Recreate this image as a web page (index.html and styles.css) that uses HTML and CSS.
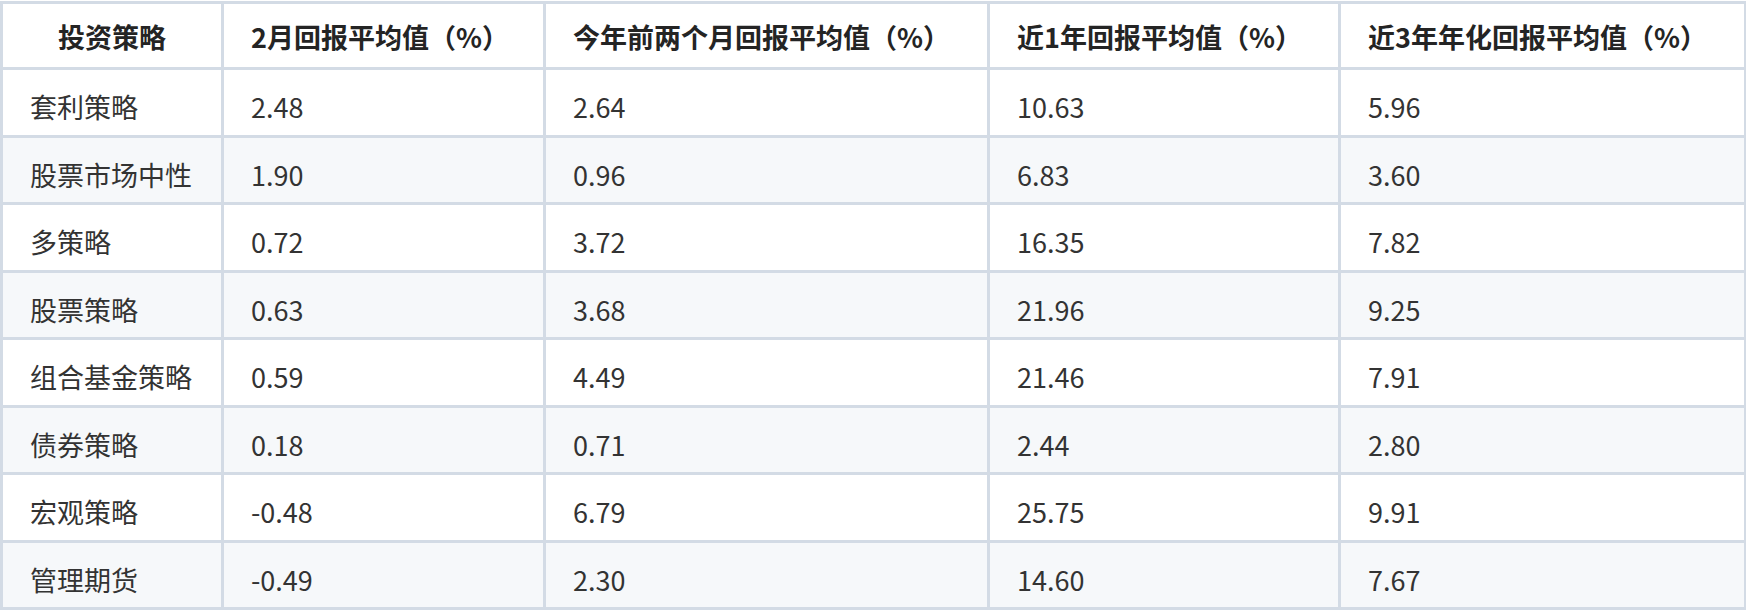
FILE: index.html
```html
<!DOCTYPE html>
<html lang="zh-CN">
<head>
<meta charset="utf-8">
<title>投资策略回报</title>
<link rel="stylesheet" href="styles.css">
</head>
<body>
<table class="returns">
  <colgroup>
    <col class="c1"><col class="c2"><col class="c3"><col class="c4"><col class="c5">
  </colgroup>
  <thead>
    <tr>
      <th class="center">投资策略</th>
      <th>2月回报平均值（%）</th>
      <th>今年前两个月回报平均值（%）</th>
      <th>近1年回报平均值（%）</th>
      <th>近3年年化回报平均值（%）</th>
    </tr>
  </thead>
  <tbody>
    <tr><td>套利策略</td><td>2.48</td><td>2.64</td><td>10.63</td><td>5.96</td></tr>
    <tr><td>股票市场中性</td><td>1.90</td><td>0.96</td><td>6.83</td><td>3.60</td></tr>
    <tr><td>多策略</td><td>0.72</td><td>3.72</td><td>16.35</td><td>7.82</td></tr>
    <tr><td>股票策略</td><td>0.63</td><td>3.68</td><td>21.96</td><td>9.25</td></tr>
    <tr><td>组合基金策略</td><td>0.59</td><td>4.49</td><td>21.46</td><td>7.91</td></tr>
    <tr><td>债券策略</td><td>0.18</td><td>0.71</td><td>2.44</td><td>2.80</td></tr>
    <tr><td>宏观策略</td><td>-0.48</td><td>6.79</td><td>25.75</td><td>9.91</td></tr>
    <tr><td>管理期货</td><td>-0.49</td><td>2.30</td><td>14.60</td><td>7.67</td></tr>
  </tbody>
</table>
</body>
</html>
```

FILE: styles.css
```css
html, body {
  margin: 0;
  padding: 0;
  background: #ffffff;
}

body {
  padding: 1px 0 0 0;
  font-family: "Noto Sans CJK SC", "Noto Sans", sans-serif;
  color: #333333;
}

.returns {
  width: 1744px;
  border-collapse: collapse;
  table-layout: fixed;
  font-size: 27px;
}

.c1 { width: 221px; }
.c2 { width: 322px; }
.c3 { width: 444px; }
.c4 { width: 351px; }
.c5 { width: 406px; }

.returns th,
.returns td {
  border: 3px solid #d3dbe5;
  line-height: 40px;
  text-align: left;
  vertical-align: top;
  white-space: nowrap;
}

.returns th {
  padding: 13px 27px 10px 27px;
  font-weight: 700;
  color: #242424;
}

.returns th.center {
  text-align: center;
}

.returns td {
  padding: 17px 27px 7.5px 27px;
  color: #333333;
}

.returns tbody tr:nth-child(even) td {
  background: #f6f8fa;
}
```
